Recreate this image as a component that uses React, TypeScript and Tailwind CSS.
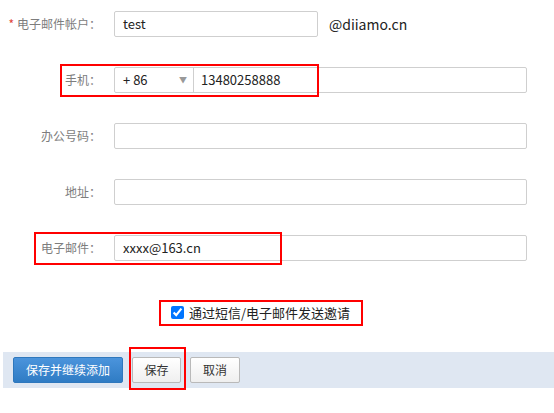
import React from 'react';

const font = { fontFamily: '"Microsoft YaHei", "Noto Sans CJK SC", "Liberation Sans", sans-serif' };

function Label({ text, required }: { text: string; required?: boolean }) {
  return (
    <div className="w-[101px] shrink-0 flex justify-end items-center text-[12px] text-[#7d7d7d] whitespace-nowrap">
      {required && <span className="text-[#e0433a] mr-[3px] text-[12px]">*</span>}
      {text}
    </div>
  );
}

function TextInput({ value, className }: { value?: string; className?: string }) {
  return (
    <div className={`h-[26px] border border-[#cfcfcf] rounded-[2px] bg-white flex items-center px-[8px] text-[13px] text-[#222] ${className ?? ''}`}>
      {value}
    </div>
  );
}

export default function App() {
  return (
    <div className="relative w-[554px] h-[413px] bg-white overflow-hidden" style={font}>
      <div className="flex flex-col gap-[30px] pt-[11px]">
        {/* 电子邮件帐户 */}
        <div className="flex items-center gap-[13px]">
          <Label text="电子邮件帐户：" required />
          <TextInput value="test" className="w-[204px]" />
          <span className="ml-[-2px] text-[14px] text-[#222]">@diiamo.cn</span>
        </div>

        {/* 手机 */}
        <div className="flex items-center gap-[13px]">
          <Label text="手机：" />
          <div className="w-[413px] h-[26px] border border-[#cfcfcf] rounded-[2px] flex items-stretch text-[13px] text-[#222]">
            <div className="w-[79px] border-r border-[#cfcfcf] flex items-center justify-between pl-[8px] pr-[6px]">
              <span>+ 86</span>
              <span className="text-[8px] text-[#999]">▼</span>
            </div>
            <div className="flex items-center pl-[7px]">13480258888</div>
          </div>
        </div>

        {/* 办公号码 */}
        <div className="flex items-center gap-[13px]">
          <Label text="办公号码：" />
          <TextInput className="w-[413px]" />
        </div>

        {/* 地址 */}
        <div className="flex items-center gap-[13px]">
          <Label text="地址：" />
          <TextInput className="w-[413px]" />
        </div>

        {/* 电子邮件 */}
        <div className="flex items-center gap-[13px]">
          <Label text="电子邮件：" />
          <TextInput value="xxxx@163.cn" className="w-[413px]" />
        </div>
      </div>

      {/* 邀请 */}
      <div className="mt-[39px] h-[25px] flex items-center pl-[171px] gap-[5px] text-[13px] text-[#222]">
        <input type="checkbox" checked readOnly className="w-[13px] h-[13px] m-0" />
        <span>通过短信/电子邮件发送邀请</span>
      </div>

      {/* footer */}
      <div className="mt-[27px] ml-[3px] h-[36px] bg-[#dfe7f2] flex items-start pt-[5px] pl-[10px] gap-[9px] text-[12px]">
        <button className="w-[110px] h-[26px] rounded-[2px] border border-[#2f78bd] bg-gradient-to-b from-[#4b94dc] to-[#2f7cc4] text-white">
          保存并继续添加
        </button>
        <button className="w-[49px] h-[26px] rounded-[2px] border border-[#b9b9b9] bg-gradient-to-b from-white to-[#efefef] text-[#333]">
          保存
        </button>
        <button className="w-[50px] h-[26px] rounded-[2px] border border-[#b9b9b9] bg-gradient-to-b from-white to-[#efefef] text-[#333]">
          取消
        </button>
      </div>

      {/* annotation boxes */}
      <div className="absolute left-[60px] top-[64px] w-[259px] h-[33px] border-2 border-[#ff0000] pointer-events-none" />
      <div className="absolute left-[34px] top-[232px] w-[248px] h-[33px] border-2 border-[#ff0000] pointer-events-none" />
      <div className="absolute left-[159px] top-[300px] w-[204px] h-[26px] border-2 border-[#ff0000] pointer-events-none" />
      <div className="absolute left-[129px] top-[347px] w-[57px] h-[43px] border-2 border-[#ff0000] pointer-events-none" />
    </div>
  );
}
